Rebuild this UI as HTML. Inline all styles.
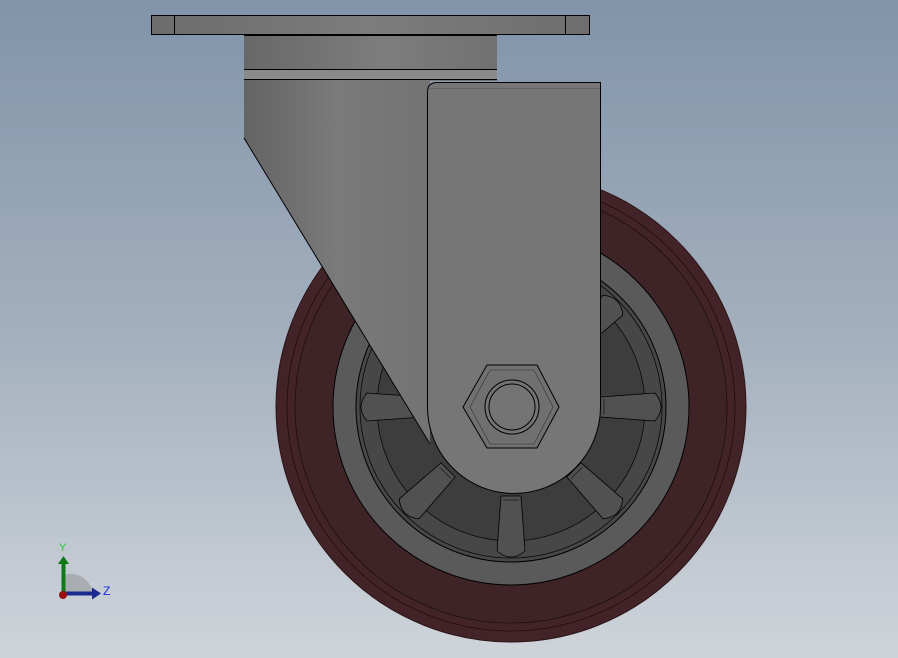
<!DOCTYPE html>
<html><head><meta charset="utf-8"><style>
html,body{margin:0;padding:0;width:898px;height:658px;overflow:hidden}
</style></head><body>
<svg width="898" height="658" viewBox="0 0 898 658" xmlns="http://www.w3.org/2000/svg">
<defs>
<linearGradient id="bg" x1="0" y1="0" x2="0" y2="1">
<stop offset="0" stop-color="#8194aa"/><stop offset="0.5" stop-color="#a3afbd"/><stop offset="1" stop-color="#cfd4da"/>
</linearGradient>
<linearGradient id="body" x1="0" y1="0" x2="1" y2="0">
<stop offset="0" stop-color="#646464"/><stop offset="0.5" stop-color="#7a7a7a"/><stop offset="1" stop-color="#737373"/>
</linearGradient>
<linearGradient id="stem" x1="0" y1="0" x2="1" y2="0">
<stop offset="0" stop-color="#686868"/><stop offset="0.55" stop-color="#7d7d7d"/><stop offset="1" stop-color="#717171"/>
</linearGradient>
<linearGradient id="cap" x1="0" y1="0" x2="1" y2="0">
<stop offset="0" stop-color="#6c6c6c"/><stop offset="0.5" stop-color="#7c7c7c"/><stop offset="1" stop-color="#6e6e6e"/>
</linearGradient>
<g id="sp"><path d="M600,397 L655,393 Q667,407 655,421 L600,417 Z" fill="#515151" stroke="#000" stroke-width="0.8"/><line x1="604" y1="399" x2="604" y2="415" stroke="#000" stroke-width="0.5"/></g>
</defs>
<rect width="898" height="658" fill="url(#bg)"/>
<g stroke="#000" stroke-width="1">
<circle cx="511" cy="407" r="235" fill="#422327" stroke="#2a1517"/>
<circle cx="511" cy="407" r="224" fill="none" stroke="#1c0e10" stroke-width="0.8"/>
<circle cx="511" cy="407" r="216" fill="#3f2427" stroke="#1c0e10" stroke-width="0.8"/>
<circle cx="511" cy="407" r="178" fill="#5a5a5a"/>
<circle cx="511" cy="407" r="155" fill="#474747"/>
<circle cx="511" cy="407" r="151" fill="none" stroke-width="0.7"/>
<circle cx="511" cy="407" r="134" fill="#3d3d3d" stroke-width="0.7"/>
<use href="#sp"/>
<use href="#sp" transform="rotate(45 511 407)"/>
<use href="#sp" transform="rotate(90 511 407)"/>
<use href="#sp" transform="rotate(135 511 407)"/>
<use href="#sp" transform="rotate(180 511 407)"/>
<use href="#sp" transform="rotate(225 511 407)"/>
<use href="#sp" transform="rotate(315 511 407)"/>
</g>
<rect x="151.5" y="15.5" width="438" height="19" fill="url(#cap)" stroke="#000"/>
<line x1="174.5" y1="15" x2="174.5" y2="35" stroke="#000"/>
<line x1="565.5" y1="15" x2="565.5" y2="35" stroke="#000"/>
<rect x="244" y="35" width="253" height="46" fill="url(#stem)"/>
<line x1="244" y1="35.5" x2="497" y2="35.5" stroke="#000"/>
<rect x="244" y="70" width="253" height="9" fill="#8a8a8a"/>
<line x1="244" y1="69.5" x2="497" y2="69.5" stroke="#000"/>
<line x1="244" y1="79.5" x2="497" y2="79.5" stroke="#000"/>
<polygon points="244,80 430,80 430,445 244,138" fill="url(#body)"/>
<line x1="244" y1="138" x2="430" y2="444" stroke="#000"/>
<path d="M427.5,92 Q427.5,82.5 437,82.5 L600.5,82.5 L600.5,407 A86.5,86.5 0 0 1 427.5,407 Z" fill="#767676" stroke="#000"/>
<line x1="428" y1="88.5" x2="600" y2="88.5" stroke="#555" stroke-width="0.6"/>
<polygon points="463,407 487,365 537,365 559,407 537,448 487,448" fill="#707070" stroke="#000"/>
<polygon points="470,407 490,370 534,370 553,407 534,444 490,444" fill="none" stroke="#333" stroke-width="0.6"/>
<circle cx="512" cy="407" r="27" fill="#747474" stroke="#000"/>
<circle cx="512" cy="407" r="23" fill="none" stroke="#000"/>
<path d="M63,593 L63,575 A23,23 0 0 1 93,593 Z" fill="#a9adb2"/>
<rect x="61.5" y="562" width="4" height="32" fill="#0e7a16"/>
<polygon points="58,564 63.5,556 69,564" fill="#0e7a16"/>
<rect x="63" y="591.5" width="30" height="4" fill="#1a2a8e"/>
<polygon points="92,587.5 101,593.5 92,599.5" fill="#1a2a8e"/>
<circle cx="63" cy="595" r="4" fill="#9a1010"/>
<text x="59" y="551" font-family="Liberation Sans, sans-serif" font-size="11" fill="#1fd02a">Y</text>
<text x="103" y="595" font-family="Liberation Sans, sans-serif" font-size="12" fill="#1a2ad0">Z</text>
</svg>
</body></html>
